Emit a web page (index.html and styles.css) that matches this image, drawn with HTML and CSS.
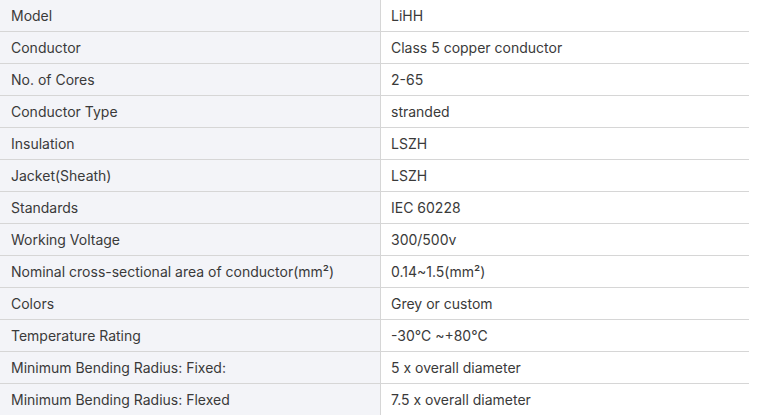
FILE: index.html
```html
<!DOCTYPE html>
<html>
<head>
<meta charset="utf-8">
<link rel="stylesheet" href="styles.css">
</head>
<body>
<table class="spec">
<tbody>
<tr><td class="k">Model</td><td class="v">LiHH</td></tr>
<tr><td class="k">Conductor</td><td class="v">Class 5 copper conductor</td></tr>
<tr><td class="k">No. of Cores</td><td class="v">2-65</td></tr>
<tr><td class="k">Conductor Type</td><td class="v">stranded</td></tr>
<tr><td class="k">Insulation</td><td class="v">LSZH</td></tr>
<tr><td class="k">Jacket(Sheath)</td><td class="v">LSZH</td></tr>
<tr><td class="k">Standards</td><td class="v">IEC 60228</td></tr>
<tr><td class="k">Working Voltage</td><td class="v">300/500v</td></tr>
<tr><td class="k">Nominal cross-sectional area of conductor(mm²)</td><td class="v">0.14~1.5(mm²)</td></tr>
<tr><td class="k">Colors</td><td class="v">Grey or custom</td></tr>
<tr><td class="k">Temperature Rating</td><td class="v">-30℃ ~+80℃</td></tr>
<tr><td class="k">Minimum Bending Radius: Fixed:</td><td class="v">5 x overall diameter</td></tr>
<tr><td class="k">Minimum Bending Radius: Flexed</td><td class="v">7.5 x overall diameter</td></tr>
</tbody>
</table>
</body>
</html>
```
FILE: styles.css
```css
html, body {
  margin: 0;
  padding: 0;
  background: #ffffff;
}
body {
  font-family: Inter, "Noto Sans", sans-serif;
  font-size: 14px;
  color: #3a3a3a;
}
.spec {
  border-collapse: separate;
  border-spacing: 0;
  width: 749px;
  table-layout: fixed;
}
.spec td {
  box-sizing: border-box;
  height: 32px;
  padding: 0 10px 1px 11px;
  border-bottom: 1px solid #d6d6d6;
  vertical-align: middle;
  white-space: nowrap;
  line-height: 17px;
}
.spec td.k {
  width: 381px;
  background: #f3f4f8;
  border-right: 1px solid #d6d6d6;
}
.spec td.v {
  padding-left: 10px;
  background: #ffffff;
}
```
